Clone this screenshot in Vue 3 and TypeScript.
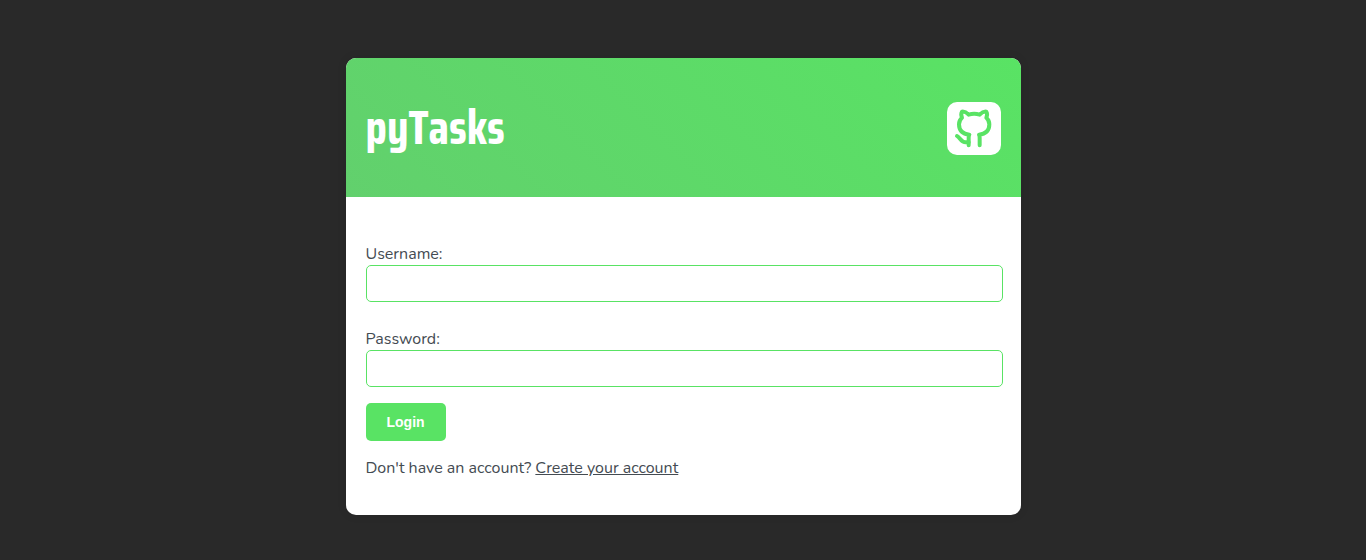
<script setup lang="ts">
import { ref } from 'vue'

const username = ref('')
const password = ref('')
</script>

<template>
  <main class="page">
    <section class="card">
      <header class="banner">
        <h1 class="title">pyTasks</h1>
        <a class="github" href="#" aria-label="GitHub">
          <svg viewBox="36 36 162 159" fill="none" stroke="currentColor" stroke-width="12" stroke-linecap="round" stroke-linejoin="round" aria-hidden="true">
            <path d="M101 166V144C101 139 101 137 103 134C81 132 72 120 72 103C72 95 75 88 81 83C78 76 78 70 81 65C88 64 94 67 101 74C111 71 124 71 134 74C141 67 147 64 154 65C157 70 157 76 154 83C160 88 163 95 163 103C163 120 154 132 132 134C134 137 134 139 134 144V166" />
            <path d="M66 138C75 142 78 157 92 157H101" />
          </svg>
        </a>
      </header>
      <form class="form" @submit.prevent>
        <div class="field">
          <label for="username">Username:</label>
          <input id="username" v-model="username" type="text" autocomplete="username" />
        </div>
        <div class="field">
          <label for="password">Password:</label>
          <input id="password" v-model="password" type="password" autocomplete="current-password" />
        </div>
        <button class="login" type="submit">Login</button>
        <p class="signup">Don't have an account? <a href="#">Create your account</a></p>
      </form>
    </section>
  </main>
</template>

<style>
body {
  margin: 0;
  background: #292929;
}
</style>

<style scoped>
.page {
  display: flex;
  justify-content: center;
  padding: 58px 20px 45px;
  color: #444b52;
  font: 16px/22px Nunito, Lato, sans-serif;
}
.card {
  width: 100%;
  max-width: 675px;
  overflow: hidden;
  border-radius: 10px;
  background: #fff;
  box-shadow: 0 0 10px rgba(0, 0, 0, 0.1);
}
.banner {
  display: flex;
  align-items: center;
  justify-content: space-between;
  padding: 33px 20px 31px;
  background: linear-gradient(45deg, #62d06d, #59e364);
}
.title {
  margin: 0;
  padding-bottom: 2px;
  color: #fff;
  font: bold 48px/73px "Saira Condensed", "Liberation Sans Narrow", "Open Sans Condensed", sans-serif;
}
.github {
  display: flex;
  width: 54px;
  border-radius: 10px;
  background: #fff;
  color: #59e364;
}
.github svg {
  width: 100%;
}
.form {
  padding: 46px 18px 36px 20px;
}
.field {
  display: flex;
  flex-direction: column;
  margin-bottom: 26px;
}
.field + .field {
  margin-bottom: 16px;
}
.field input {
  box-sizing: border-box;
  width: 100%;
  height: 37px;
  padding: 8px 10px;
  border: 1px solid #59e364;
  border-radius: 5px;
  outline: none;
  background: #fff;
  font: inherit;
}
.login {
  display: block;
  height: 38px;
  padding: 0 21px;
  border: 0;
  border-radius: 5px;
  background: #59e364;
  color: #fff;
  font: bold 14px/38px "Liberation Sans", Arial, sans-serif;
  cursor: pointer;
}
.signup {
  margin: 16px 0 0;
}
.signup a {
  color: inherit;
}
</style>
